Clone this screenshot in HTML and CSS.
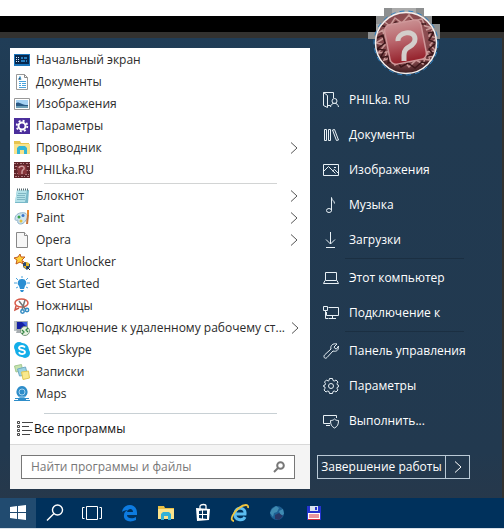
FILE: index.html
```html
<!DOCTYPE html>
<html lang="ru">
<head>
<meta charset="utf-8">
<meta name="viewport" content="width=device-width, initial-scale=1">
<title>Меню Пуск</title>
<link rel="stylesheet" href="styles.css">
</head>
<body>
<div class="desktop">
  <div class="backdrop"></div>
  <main class="start">
    <div class="avatar">
      <svg viewBox="0 0 72 68" aria-hidden="true">
        <defs>
          <radialGradient id="ball" cx=".5" cy=".4" r=".6"><stop offset="0" stop-color="#a85a5e"/><stop offset=".7" stop-color="#83484c"/><stop offset="1" stop-color="#3a1a1c"/></radialGradient>
          <linearGradient id="tile" x1="0" y1="0" x2="0" y2="1"><stop offset="0" stop-color="#c98f91"/><stop offset=".45" stop-color="#b8636a"/><stop offset="1" stop-color="#94202a"/></linearGradient>
          <clipPath id="round"><circle cx="38" cy="35" r="30"/></clipPath>
        </defs>
        <path fill="#8d8f90" d="M16 0h40v8h8v8h8v15H0v-7h8V8h8z"/>
        <path fill="#aaa" d="M24 0h24v8H24zM8 16h8v8H8zM56 16h8v8h-8z"/>
        <circle cx="38" cy="35" r="32" fill="none" stroke="#2f82c4" stroke-dasharray="5 4"/>
        <circle cx="38" cy="35" r="31" fill="url(#ball)"/>
        <g clip-path="url(#round)" fill="none" stroke="#c99a98" stroke-width="1.5">
          <path d="M14 12l8 6 5-8 7 5 7-8 5 6 8-2 3 7 8 2M8 26l7-4 1 8-8 5 9 2-7 8 9-1-3 8 10-3 1 8 8-5 6 7 7-7 7 4 3-8 8 1M58 22l8-3-5 9 8 2-7 7 6 6-9 1 3 8-8-1"/>
          <path stroke="#3c171a" d="M12 17l9 3 7-6 7 4 8-6 7 4 8 0M9 30l6-3 2 8-8 6 8 1-5 8 9-2-1 7 9-2 4 6 7-4 7 5 7-6 8 2M60 25l6-1-5 8 7 3-7 6 4 5-8 3"/>
        </g>
        <rect x="19" y="14" width="37" height="40" rx="6" fill="url(#tile)" stroke="#cf9799" stroke-width="1.5" transform="rotate(-11 38 34)"/>
        <path d="M30 33c-1-9 17-12 17-2 0 9-11 6-11 16v6" fill="none" stroke="#d3cecb" stroke-width="5"/>
        <circle cx="38" cy="35" r="30.5" fill="none" stroke="#f4f1f0" stroke-width="1.5"/>
      </svg>
    </div>

    <section class="programs">
      <ul class="list">
        <li><a class="item" href="#"><svg viewBox="0 0 16 16"><path fill="#1b75bb" d="M0 2h16v12H0z"/><path fill="#07284d" d="M1 3h14v9H1z"/><path stroke="#cfe8ff" stroke-dasharray="1 1" d="M2 5.500h4M2 7.500h4M2 9.500h4"/><path fill="#287fbf" d="M7 5h2v2H7zM10 5h3v2h-3zM7 8h4v2H7zM12 8h1v2h-1z"/></svg><span>Начальный экран</span></a></li>
        <li><a class="item" href="#"><svg viewBox="0 0 16 16"><path fill="#fff" stroke="#999" d="M2.500.500h8l3 3v12h-11z"/><path fill="none" stroke="#888" d="M10.500.500v3h3"/><path stroke="#4aa3dc" d="M5 7.500h7M5 9.500h2M8 9.500h4M5 11.500h2M8 11.500h4M5 13.500h7M4.500 5.500l1.500-3 1 3"/></svg><span>Документы</span></a></li>
        <li><a class="item" href="#"><svg viewBox="0 0 16 16"><path fill="#fff" stroke="#999" d="M.500 2.500h15v11H.500z"/><path fill="#a5d2f4" d="M2 4h12v8H2z"/><path fill="#295985" d="M2 7c3-2 5 2 12 2v2H2z"/><path fill="#6c9eb5" d="M2 10h12v2H2z"/></svg><span>Изображения</span></a></li>
        <li><a class="item" href="#"><svg viewBox="0 0 16 16"><path fill="#4b2e9c" d="M0 0h16v16H0z"/><circle cx="8" cy="8" r="3.500" fill="none" stroke="#fff" stroke-width="2"/><circle cx="8" cy="8" r="5.300" fill="none" stroke="#fff" stroke-width="1.800" stroke-dasharray="2 2.160"/></svg><span>Параметры</span></a></li>
        <li><a class="item" href="#"><svg viewBox="0 0 16 16"><path fill="#e8c44e" d="M0 1h6l1 2h8v11H0z"/><path fill="#fae38b" d="M0 4h16v10H0z"/><path fill="#35b5d5" d="M3 14V8l2-2h6l2 2v6h-3v-4H6v4z"/></svg><span>Проводник</span><svg class="more" viewBox="0 0 8 12"><path d="M1 .500l6 5.500-6 5.500"/></svg></a></li>
        <li><a class="item" href="#"><svg viewBox="0 0 16 16"><path fill="#5f2429" d="M0 0h16v16H0z"/><path stroke="#b48085" stroke-dasharray="2 1 1 2" d="M0 1.500h16M1 4.500h15M0 7.500h4M12 8.500h4M0 11.500h5M11 12.500h5M1 14.500h15"/><path fill="#88363c" d="M3 4l9-1 1 9-9 1z"/><path fill="none" stroke="#cf9c9d" stroke-width="1.500" d="M5 6c1-3 6-2 5 1-1 1-2 1-2 3v2"/></svg><span>PHILka.RU</span></a></li>
      </ul>
      <hr class="rule">
      <ul class="list">
        <li><a class="item" href="#"><svg viewBox="0 0 16 16"><path fill="#79b9c9" d="M3 2h12l-1 13H1z"/><path fill="#b4e2e9" d="M3 2h10l-2 12H1z"/><path stroke="#7fb7c4" d="M4 5.500h8M3 7.500h8M3 9.500h8M3 11.500h8"/><path stroke="#55686e" stroke-dasharray="1 1" stroke-width="2" d="M3 1.500h12"/></svg><span>Блокнот</span><svg class="more" viewBox="0 0 8 12"><path d="M1 .500l6 5.500-6 5.500"/></svg></a></li>
        <li><a class="item" href="#"><svg viewBox="0 0 16 16"><path fill="#cfe4f0" stroke="#8fb3ca" d="M1 9c0-5 5-7 10-6 4 2 3 5 1 7-2 4-6 5-8 3-1-2 1-3-1-3-1 1-2 0-2-1z"/><circle cx="5" cy="7" r="1.500" fill="#35a147"/><circle cx="9" cy="5.500" r="1.500" fill="#3c75c9"/><circle cx="7" cy="11" r="1.500" fill="#e2c23f"/><path stroke="#e88a32" stroke-width="2" d="M14 0v5"/><path stroke="#c9773b" stroke-width="2" d="M14 5l-1 9"/></svg><span>Paint</span><svg class="more" viewBox="0 0 8 12"><path d="M1 .500l6 5.500-6 5.500"/></svg></a></li>
        <li><a class="item" href="#"><svg viewBox="0 0 16 16"><path fill="#f6f6f6" stroke="#888" d="M2.500.500h8l3 3v12h-11z"/><path fill="#fff" stroke="#888" d="M10.500.500v3h3"/></svg><span>Opera</span><svg class="more" viewBox="0 0 8 12"><path d="M1 .500l6 5.500-6 5.500"/></svg></a></li>
        <li><a class="item" href="#"><svg viewBox="0 0 16 16"><path fill="#ffd23c" stroke="#c45b1c" d="M6 0l1 3 4 0-3 3 1 4-3-2-4 2 1-4-3-2 4-1z"/><path stroke="#c46a1d" d="M9 7l3 3"/><path fill="#284a73" d="M9 9l3-1 4 2v3l-3 3-4-3z"/><path fill="#e2b529" d="M12 8l3 1v3h-3zM9 12h3v3z"/><path stroke="#222" d="M13 13l3 3"/></svg><span>Start Unlocker</span></a></li>
        <li><a class="item" href="#"><svg viewBox="0 0 16 16"><path fill="#2b8fd3" d="M8 3a4 4 0 0 1 3 7l-1 3H6l-1-3a4 4 0 0 1 3-7zM6 14h4l-1 2H7z"/><path stroke="#4ba3dc" d="M8 0v2M2 2l2 2M14 2l-2 2M0 7h3M13 7h3M2 12l2-1M14 12l-2-1"/></svg><span>Get Started</span></a></li>
        <li><a class="item" href="#"><svg viewBox="0 0 16 16"><ellipse cx="7.500" cy="5" rx="6.500" ry="4" fill="none" stroke="#d85b49" stroke-width="1.500"/><path stroke="#777" stroke-width="1.500" d="M5 3l7 9M11 2l-3 10"/><circle cx="8.500" cy="13.500" r="1.700" fill="none" stroke="#328bc3" stroke-width="1.500"/><circle cx="13" cy="12" r="1.700" fill="none" stroke="#328bc3" stroke-width="1.500"/><path stroke="#cf5647" fill="none" stroke-width="1.500" d="M2 8l-1 4 4-2"/></svg><span>Ножницы</span></a></li>
        <li><a class="item" href="#"><svg viewBox="0 0 16 16"><path fill="#bfc5c7" d="M0 1h4v10H0z"/><path fill="#1521a4" stroke="#a5acb0" d="M2.500 1.500h11v8h-11z"/><path fill="#3e62df" d="M8 2h5v5z"/><path fill="#a7adb1" d="M3 10h5v3H2z"/><circle cx="11" cy="11" r="4.500" fill="#e5f2df" stroke="#7c9980"/><path fill="none" stroke="#338645" stroke-width="1.300" d="M8 10l2 2-2 2M14 8l-2 2 2 2"/></svg><span>Подключение к удаленному рабочему ст...</span><svg class="more" viewBox="0 0 8 12"><path d="M1 .500l6 5.500-6 5.500"/></svg></a></li>
        <li><a class="item" href="#"><svg viewBox="0 0 16 16"><circle cx="5" cy="5" r="5" fill="#13aee9"/><circle cx="11" cy="11" r="5" fill="#13aee9"/><circle cx="8" cy="8" r="7" fill="#13aee9"/><path fill="none" stroke="#fff" stroke-width="1.800" d="M11 5.500C9 3 4.500 4 5 6.300c.5 2.200 6 1.200 6 3.700 0 2.300-4.500 3-6.200.2"/></svg><span>Get Skype</span></a></li>
        <li><a class="item" href="#"><svg viewBox="0 0 16 16"><path fill="#c5e3ae" stroke="#a5c892" d="M.500 2l7-1.500 1 6-6.500 1.500z"/><path fill="#9bd2e2" stroke="#71abc5" d="M3.500 5l8-2 2 8-8 1z"/><path fill="#f9e98c" stroke="#dfc653" d="M7.500 8l7-1 1 7-6.500 1.500z"/></svg><span>Записки</span></a></li>
        <li><a class="item" href="#"><svg viewBox="0 0 16 16"><path fill="#2e8dc9" d="M8 0a6 6 0 0 1 4 10l-2 2h5v1h-3v1h4v1H0v-1h4v-1H1v-1h5l-2-2A6 6 0 0 1 8 0z"/><circle cx="8" cy="6" r="3" fill="none" stroke="#a7d3ee"/><path stroke="#a7d3ee" d="M5 11h6"/></svg><span>Maps</span></a></li>
      </ul>
      <hr class="rule rule-last">
      <a class="item all" href="#"><svg viewBox="0 0 16 16"><path fill="none" stroke="#444" d="M.500.500h2v2h-2zM.500 4.500h2v2h-2zM.500 8.500h2v2h-2zM.500 12.500h2v2h-2zM5 1.500h11M5 5.500h7M5 9.500h10M5 13.500h8"/></svg><span>Все программы</span></a>
      <form class="search">
        <label class="field">
          <input type="text" aria-label="Поиск" placeholder="Найти программы и файлы">
          <svg viewBox="0 0 12 12"><circle cx="7.500" cy="4.500" r="3.300"/><path d="M5 7L1 11"/></svg>
        </label>
      </form>
    </section>

    <aside class="places">
      <ul class="place-list">
        <li><a class="place" href="#"><svg viewBox="0 0 16 16"><path d="M10.500 6V.500H.500v13l4 2V3.500l-4-3M4.500 13.500h3"/><circle cx="11.500" cy="9" r="2.500"/><path d="M7.500 15c.5-5 7.500-5 8 0"/></svg><span>PHILka. RU</span></a></li>
        <li><a class="place" href="#"><svg viewBox="0 0 16 16"><path d="M1.500 2.500h2v11h-2zM5.500 2.500h2v11h-2zM9.500 3l2-.5 4 10.500-2 .5z"/></svg><span>Документы</span></a></li>
        <li><a class="place" href="#"><svg viewBox="0 0 16 16"><path d="M.500 2.500h15v11H.500zM.500 9.500l5-5 7 7M9.500 9l2-1.500 4 4M11 5.500h2"/></svg><span>Изображения</span></a></li>
        <li><a class="place" href="#"><svg viewBox="0 0 16 16"><ellipse cx="6" cy="13.500" rx="2.500" ry="2"/><path d="M8.500 13.500V.500c0 3 3 3 3 6"/></svg><span>Музыка</span></a></li>
        <li><a class="place" href="#"><svg viewBox="0 0 16 16"><path d="M7.500 0v12M3 7.500L7.500 12 12 7.500M3 15.500h9"/></svg><span>Загрузки</span></a></li>
      </ul>
      <hr class="divider">
      <ul class="place-list">
        <li><a class="place" href="#"><svg viewBox="0 0 16 16"><path d="M2.500 10.500v-8h11v8zM2 10.500l-1.500 3h15l-1.500-3"/></svg><span>Этот компьютер</span></a></li>
        <li><a class="place" href="#"><svg viewBox="0 0 16 16"><path d="M5.500 2.500h10v8h-12V7M.500 1.500h4v4h-4zM2.500 5.500v8h3M9.500 10.500v3M6 13.500h7"/></svg><span>Подключение к</span></a></li>
      </ul>
      <hr class="divider">
      <ul class="place-list">
        <li><a class="place" href="#"><svg viewBox="0 0 16 16"><path d="M14 1l-3 3 1 1.500 1.500.5L15.500 3c.5 4-2 6-5.500 5l-6 6.500c-2 2-4-.5-2.500-2.500L8 6C7 2.500 10 0 14 1z"/></svg><span>Панель управления</span></a></li>
        <li><a class="place" href="#"><svg viewBox="0 0 16 16"><path d="M6.500.500h3l.5 2 1.300.5 1.700-1 2 2-1 1.700.5 1.300 1.500.5v1l-1.500.5-.5 1.300 1 1.700-2 2-1.700-1-1.300.5-.5 2h-3l-.5-2-1.300-.5-1.700 1-2-2 1-1.700L2 9 .500 8.500v-1L2 7l.5-1.300-1-1.700 2-2 1.700 1L6 2.500z"/><circle cx="8" cy="8" r="2.500"/></svg><span>Параметры</span></a></li>
        <li><a class="place" href="#"><svg viewBox="0 0 16 16"><path d="M7 10.500H.500v-8h13V5M3 12.500h4M7.500 7.500c2 0 3-.5 4-1.500 1 1 2 1.500 4 1.500 0 4-1 6-4 7.500-3-1.500-4-3.500-4-7.500z"/></svg><span>Выполнить...</span></a></li>
      </ul>
      <div class="power">
        <button class="shutdown" type="button">Завершение работы</button>
        <button class="options" type="button" aria-label="Другие действия"><svg class="more" viewBox="0 0 8 12"><path d="M1 .500l6 5.500-6 5.500"/></svg></button>
      </div>
    </aside>
  </main>

  <nav class="taskbar">
    <button class="task home" type="button" aria-label="Пуск"><svg viewBox="0 0 20 20"><path fill="#fff" d="M2 4l7-1v6H2zM10 3l8-1v7h-8zM2 10h7v6l-7-1zM10 10h8v7l-8-1z"/></svg></button>
    <button class="task" type="button" aria-label="Поиск"><svg viewBox="0 0 20 20"><g fill="none" stroke="#fff" stroke-width="1.400"><circle cx="12.500" cy="7" r="5"/><path d="M9 10.500L2 17.500"/></g></svg></button>
    <button class="task" type="button" aria-label="Представление задач"><svg viewBox="0 0 20 20"><path fill="none" stroke="#fff" d="M4.500 3.500h11v13h-11zM2.500 4.500h-2v11h2M17.500 4.500h2v11h-2"/></svg></button>
    <button class="task" type="button" aria-label="Edge"><svg viewBox="0 0 20 20"><path fill="#0d7be0" d="M3 9c1-9 15-10 15 1v2H8c0 4 6 4 9 2v3c-6 3-13 1-12-5 0-3 2-4 4-5-3 0-5 1-6 2zM8 9h6c0-4-5-4-6 0z"/></svg></button>
    <button class="task" type="button" aria-label="Проводник"><svg viewBox="0 0 20 20"><path fill="#e8bf45" d="M2 3h6l1 2h9v11H2z"/><path fill="#fbe38b" d="M2 6h16v10H2z"/><path fill="#32b1d6" d="M5 17v-6l2-2h6l2 2v6h-3v-4H8v4z"/></svg></button>
    <button class="task" type="button" aria-label="Магазин"><svg viewBox="0 0 20 20"><path fill="none" stroke="#fff" stroke-width="1.300" d="M7 7V3c1-2 6-2 6 0v4"/><path fill="#fff" d="M3 5l14 1-1 11-12 1z"/><path fill="#00315c" d="M6 8l3-.5V11H6zM10 7.500h4V11h-4zM6 12h3v3.500L6 15zM10 12h4v4l-4-.5z"/></svg></button>
    <button class="task" type="button" aria-label="Internet Explorer"><svg viewBox="0 0 20 20"><path fill="none" stroke="#5bbdf0" stroke-width="3" d="M5 11h10c1-7-9-8-10-1-1 8 8 8 10 4"/><path fill="none" stroke="#f1c53d" stroke-width="1.800" d="M4 18C-1 18 3 9 9 5c5-4 10-4 9 0"/></svg></button>
    <button class="task" type="button" aria-label="Интернет"><svg viewBox="0 0 20 20"><circle cx="10" cy="10" r="7" fill="#1d5e92"/><path fill="#3f8bb2" d="M5 6l4-3 3 2-2 4-3 1-1 4-3-4zM12 8l4-2 1 5-3 2z"/><path fill="#283766" d="M8 12l4-2 4 3-4 4-4-1z"/></svg></button>
    <button class="task" type="button" aria-label="Файловый менеджер"><svg viewBox="0 0 20 20"><path fill="#2534cf" d="M3 3h14v14H3z"/><path fill="#d9e4ef" d="M6 3h8v5H6z"/><path fill="#2534cf" d="M11 4h2v3h-2z"/><path fill="#fff" d="M4 10h12v7H4z"/><path stroke="#d52e3d" stroke-width="1.200" d="M5 12h10M5 14h10M4 16.500h12"/></svg></button>
  </nav>
</div>
</body>
</html>
```
FILE: styles.css
```css
* { box-sizing: border-box; }

body {
  margin: 0;
  background: #fff;
  color: #2b2b2b;
  font: 12px/16px "Open Sans", "Noto Sans", sans-serif;
}

ul { list-style: none; margin: 0; padding: 0; }
a { color: inherit; text-decoration: none; }
hr { border: 0; margin: 0; }
svg { display: block; flex: none; }
button { font: inherit; color: inherit; background: none; border: 0; padding: 0; }

.backdrop {
  height: 22px;
  margin-top: 16px;
  background: #000;
  border-bottom: 6px solid #333230;
}

.start {
  position: relative;
  display: flex;
  padding: 10px 32px 9px 10px;
  gap: 7px;
  background: linear-gradient(#203d57, #213a51 20%, #22394f 90%, #26384b);
  border-right: 2px solid #33322f;
}

.avatar {
  position: absolute;
  top: -30px;
  right: 62px;
  width: 72px;
}

.programs {
  flex: 300;
  min-width: 0;
  padding-top: 1px;
  background: #fff;
}

.item {
  display: flex;
  align-items: center;
  gap: 6px;
  height: 22px;
  padding: 0 12px 0 4px;
  white-space: nowrap;
}

.item svg { width: 16px; height: 16px; }

svg.more {
  width: 8px;
  height: 12px;
  margin-left: auto;
  fill: none;
  stroke: #555;
}

.item .more { width: 8px; height: 12px; }

.rule {
  height: 1px;
  margin: 2px 33px 1px 34px;
  background: #d2d4d4;
}

.rule-last {
  margin-top: 8px;
  margin-bottom: 4px;
  background: #c8d0d4;
}

.all {
  gap: 1px;
  padding-left: 7px;
  color: #111;
}

.search {
  margin-top: 4px;
  padding: 10px 15px 10px 11px;
  background: #f4f4f4;
  border-top: 1px solid #d9d9d9;
}

.field {
  display: flex;
  align-items: center;
  height: 24px;
  padding: 0 9px;
  background: #fff;
  border: 1px solid #777;
}

.field input {
  flex: 1;
  min-width: 0;
  padding: 0;
  border: 0;
  outline: 0;
  background: none;
  color: #333;
  font: inherit;
}

.field input::placeholder { color: #777; opacity: 1; }

.field svg {
  width: 12px;
  height: 12px;
  fill: none;
  stroke: #777;
  stroke-width: 2;
}

.places {
  flex: 153;
  display: flex;
  flex-direction: column;
  min-width: 0;
  padding: 34px 0 10px;
  color: #fff;
}

.place {
  display: flex;
  align-items: center;
  gap: 10px;
  height: 35px;
  padding-left: 6px;
  white-space: nowrap;
}

.place svg {
  width: 16px;
  height: 16px;
  fill: none;
  stroke: #e8f0f5;
}

.divider {
  height: 1px;
  margin: 1px 6px 1px 28px;
  background: #1b2f42;
}

.power {
  display: flex;
  height: 24px;
  margin-top: auto;
  border: 1px solid #b9c9d6;
}

.shutdown {
  flex: 1;
  white-space: nowrap;
}

.options {
  display: flex;
  align-items: center;
  justify-content: center;
  width: 24px;
  border-left: 1px solid #b9c9d6;
}

.options .more { margin: 0; stroke: #fff; }

.taskbar {
  display: flex;
  height: 31px;
  background: #00315c;
  border-bottom: 1px solid #d9e1e8;
}

.task {
  display: flex;
  align-items: center;
  justify-content: center;
  width: 37px;
}

.task svg { width: 20px; height: 20px; }

.home {
  width: 36px;
  background: #214b70;
}
```
